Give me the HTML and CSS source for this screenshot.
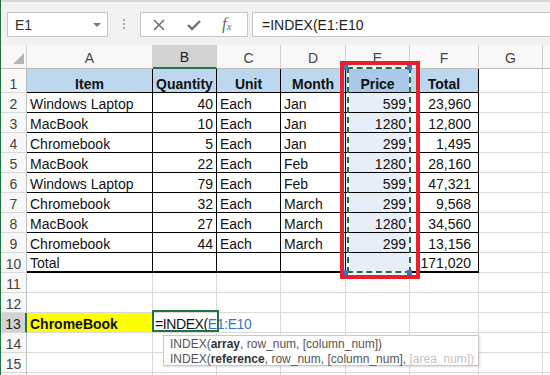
FILE: index.html
```html
<!DOCTYPE html>
<html lang="en">
  <head>
    <meta charset="UTF-8" />
    <meta name="viewport" content="width=device-width, initial-scale=1.0" />
    <title>INDEX formula</title>
    <link rel="stylesheet" href="styles.css">
  </head>
  <body>
    <div class="window">
      <div class="formula-bar">
        <div class="name-box">
          <span>E1</span>
          <span class="caret"></span>
        </div>
        <div class="grip"><i></i><i></i><i></i></div>
        <div class="fx-buttons">
          <svg class="icon" width="14" height="12" viewBox="0 0 14 12">
            <path d="M2 1 L12 11 M12 1 L2 11" stroke="#6f6f6f" stroke-width="1.6" fill="none" />
          </svg>
          <svg class="icon" width="14" height="12" viewBox="0 0 14 12">
            <path d="M1 6 L5 10 L13 2" stroke="#6f6f6f" stroke-width="2.4" fill="none" />
          </svg>
          <span class="fx"><i>f</i><sub>x</sub></span>
        </div>
        <div class="formula-input">=INDEX(E1:E10</div>
      </div>

      <div class="sheet">
        <table class="grid">
          <colgroup>
            <col class="c-rh"><col class="c-a"><col class="c-b"><col class="c-c"><col class="c-d">
            <col class="c-e"><col class="c-f"><col class="c-g"><col class="c-h">
          </colgroup>
          <tr class="col-head">
            <td class="corner"><div class="corner-box"><span class="tri"></span></div></td>
            <td>A</td><td class="active">B</td><td>C</td><td>D</td><td>E</td><td>F</td><td>G</td><td></td>
          </tr>
          <tr class="row-1">
            <td class="rh">1</td>
            <td class="t th">Item</td><td class="t th">Quantity</td><td class="t th">Unit</td>
            <td class="t th">Month</td><td class="t th sel-head">Price</td><td class="t th">Total</td>
            <td></td><td></td>
          </tr>
          <tr>
            <td class="rh">2</td>
            <td class="t">Windows Laptop</td><td class="t num">40</td><td class="t">Each</td>
            <td class="t">Jan</td><td class="t num sel">599</td><td class="t num tot">23,960</td>
            <td></td><td></td>
          </tr>
          <tr>
            <td class="rh">3</td>
            <td class="t">MacBook</td><td class="t num">10</td><td class="t">Each</td>
            <td class="t">Jan</td><td class="t num sel">1280</td><td class="t num tot">12,800</td>
            <td></td><td></td>
          </tr>
          <tr>
            <td class="rh">4</td>
            <td class="t">Chromebook</td><td class="t num">5</td><td class="t">Each</td>
            <td class="t">Jan</td><td class="t num sel">299</td><td class="t num tot">1,495</td>
            <td></td><td></td>
          </tr>
          <tr>
            <td class="rh">5</td>
            <td class="t">MacBook</td><td class="t num">22</td><td class="t">Each</td>
            <td class="t">Feb</td><td class="t num sel">1280</td><td class="t num tot">28,160</td>
            <td></td><td></td>
          </tr>
          <tr>
            <td class="rh">6</td>
            <td class="t">Windows Laptop</td><td class="t num">79</td><td class="t">Each</td>
            <td class="t">Feb</td><td class="t num sel">599</td><td class="t num tot">47,321</td>
            <td></td><td></td>
          </tr>
          <tr>
            <td class="rh">7</td>
            <td class="t">Chromebook</td><td class="t num">32</td><td class="t">Each</td>
            <td class="t">March</td><td class="t num sel">299</td><td class="t num tot">9,568</td>
            <td></td><td></td>
          </tr>
          <tr>
            <td class="rh">8</td>
            <td class="t">MacBook</td><td class="t num">27</td><td class="t">Each</td>
            <td class="t">March</td><td class="t num sel">1280</td><td class="t num tot">34,560</td>
            <td></td><td></td>
          </tr>
          <tr>
            <td class="rh">9</td>
            <td class="t">Chromebook</td><td class="t num">44</td><td class="t">Each</td>
            <td class="t">March</td><td class="t num sel">299</td><td class="t num tot">13,156</td>
            <td></td><td></td>
          </tr>
          <tr class="last">
            <td class="rh">10</td>
            <td class="t">Total</td><td class="t"></td><td class="t"></td>
            <td class="t"></td><td class="t sel"></td><td class="t num tot">171,020</td>
            <td></td><td></td>
          </tr>
          <tr><td class="rh">11</td><td></td><td></td><td></td><td></td><td></td><td></td><td></td><td></td></tr>
          <tr><td class="rh">12</td><td></td><td></td><td></td><td></td><td></td><td></td><td></td><td></td></tr>
          <tr>
            <td class="rh active">13</td>
            <td class="yellow">ChromeBook</td>
            <td class="editing">=INDEX(<span class="ref">E1:E10</span></td>
            <td></td><td></td><td></td><td></td><td></td><td></td>
          </tr>
          <tr><td class="rh">14</td><td></td><td></td><td></td><td></td><td></td><td></td><td></td><td></td></tr>
          <tr><td class="rh">15</td><td></td><td></td><td></td><td></td><td></td><td></td><td></td><td></td></tr>
          <tr><td class="rh"></td><td></td><td></td><td></td><td></td><td></td><td></td><td></td><td></td></tr>
        </table>

        <!-- range reference + highlight box -->
        <div class="ants"></div>
        <span class="handle h-tl"></span>
        <span class="handle h-tr"></span>
        <span class="handle h-bl"></span>
        <span class="handle h-br"></span>
        <div class="red-box"></div>

        <div class="active-cell"></div>

        <div class="tooltip">
          <div>INDEX(<b>array</b>, row_num, [column_num])</div>
          <div>INDEX(<b>reference</b>, row_num, [column_num], <span class="faded">[area_num])</span></div>
        </div>
      </div>
    </div>
  </body>
</html>
```

FILE: styles.css
```css
* {
  margin: 0;
  padding: 0;
  box-sizing: border-box;
}
body {
  font-family: "Liberation Sans", Arial, sans-serif;
  background-color: #fff;
  width: 550px;
  height: 375px;
  overflow: hidden;
}
.window {
  border-left: 1px solid #217346;
  height: 375px;
  overflow: hidden;
}

/* formula bar */
.formula-bar {
  height: 45px;
  background-color: #f1f1f1;
  border-top: 2px solid #d8d8d8;
  display: flex;
  align-items: flex-start;
  padding: 10px 0 0 6px;
}
.name-box {
  width: 101px;
  height: 25px;
  background: #fff;
  border: 1px solid #c6c6c6;
  display: flex;
  align-items: center;
  justify-content: space-between;
  padding: 1px 6px 0 7px;
  font-size: 14px;
  color: #333;
}
.caret {
  width: 0;
  height: 0;
  border-left: 4px solid transparent;
  border-right: 4px solid transparent;
  border-top: 4px solid #7a7a7a;
}
.grip {
  width: 32px;
  display: flex;
  flex-direction: column;
  align-items: center;
  gap: 2px;
  padding-top: 7px;
}
.grip i {
  width: 2px;
  height: 2px;
  background: #a8a8a8;
}
.fx-buttons {
  width: 108px;
  height: 25px;
  background: #fff;
  border: 1px solid #c6c6c6;
  display: flex;
  align-items: center;
  padding-left: 11px;
  gap: 21px;
}
.fx {
  font-family: "Liberation Serif", serif;
  font-size: 17px;
  line-height: 20px;
  color: #6a6a6a;
  width: 16px;
}
.fx sub {
  font-size: 11px;
  font-style: italic;
  vertical-align: -1px;
}
.formula-input {
  flex: 1;
  height: 25px;
  margin-left: 4px;
  background: #fff;
  border: 1px solid #c6c6c6;
  border-right: none;
  padding: 1px 0 0 9px;
  font-size: 14px;
  line-height: 22px;
  color: #222;
}

/* sheet grid */
.sheet {
  position: relative;
}
.grid {
  border-collapse: separate;
  border-spacing: 0;
  table-layout: fixed;
  width: 602px;
  font-size: 14px;
  color: #111;
}
.c-rh { width: 26px; }
.c-a { width: 126px; }
.c-b { width: 64px; }
.c-c { width: 64px; }
.c-d { width: 65px; }
.c-e { width: 64px; }
.c-f { width: 69px; }
.c-g { width: 64px; }
.c-h { width: 60px; }
.grid td {
  height: 20px;
  border-right: 1px solid #d9d9d9;
  border-bottom: 1px solid #d9d9d9;
  padding: 0 3px;
  line-height: 15px;
  vertical-align: bottom;
  white-space: nowrap;
}
.col-head td {
  height: 22px;
  background: #f8f8f8;
  border-right-color: #d0d0d0;
  border-bottom-color: #bdbdbd;
  text-align: center;
  vertical-align: middle;
  line-height: 20px;
  padding-top: 2px;
  color: #444;
}
.col-head td.active {
  background: #d3d3d3;
  border-bottom: 2px solid #217346;
  color: #222;
}
.col-head td.corner {
  padding: 0;
}
.corner-box {
  display: flex;
  justify-content: flex-end;
  align-items: flex-end;
  height: 21px;
  padding: 0 2px 3px 0;
}
.tri {
  width: 0;
  height: 0;
  border-style: solid;
  border-width: 0 0 11px 11px;
  border-color: transparent transparent #b5b5b5 transparent;
}
.grid td.rh {
  background: #f8f8f8;
  border-right-color: #bdbdbd;
  text-align: center;
  color: #444;
  padding: 0;
}
.grid td.rh.active {
  background: #d3d3d3;
  border-right: 2px solid #217346;
  color: #222;
}
.row-1 td {
  height: 24px;
}

/* bordered data table */
.grid td.t {
  border-right-color: #000;
  border-bottom-color: #000;
}
.grid .last td.t {
  border-bottom: 2px solid #000;
}
.th {
  background: #bdd7ee;
  font-weight: 700;
  text-align: center;
}
.th.sel-head {
  background: #aac8e9;
}
.num {
  text-align: right;
}
.num.tot {
  padding-right: 7px;
}
.sel {
  background: #e7eef8;
}
.yellow {
  background: #ffff00;
  font-weight: 700;
}
.grid td.editing {
  padding-left: 2px;
  border-right-color: transparent;
  letter-spacing: -0.4px;
}
.ref {
  color: #3b72c6;
}

/* overlays */
.red-box {
  position: absolute;
  left: 339px;
  top: 16px;
  width: 80px;
  height: 218px;
  border: 4px solid #e8202a;
}
.ants {
  position: absolute;
  left: 346px;
  top: 22px;
  width: 64px;
  height: 206px;
  border: 2px solid #fff;
}
.ants::before {
  content: "";
  position: absolute;
  inset: -2px;
  border: 2px dashed #1f7046;
}
.handle {
  position: absolute;
  width: 5px;
  height: 5px;
  background: #3f6fd0;
}
.h-tl { left: 342px; top: 20px; }
.h-tr { left: 406px; top: 20px; }
.h-bl { left: 342px; top: 225px; }
.h-br { left: 406px; top: 225px; }
.active-cell {
  position: absolute;
  left: 151px;
  top: 265px;
  width: 67px;
  height: 22px;
  border: 2px solid #217346;
}
.tooltip {
  position: absolute;
  left: 162px;
  top: 290px;
  width: 316px;
  height: 31px;
  background: #fff;
  border: 1px solid #c8c8c8;
  box-shadow: 1px 1px 2px rgba(0, 0, 0, 0.15);
  padding: 1px 6px 0;
  font-size: 12px;
  line-height: 15px;
  color: #555;
  white-space: nowrap;
}
.tooltip b {
  color: #333;
}
.faded {
  color: #c4c4c4;
}
```
